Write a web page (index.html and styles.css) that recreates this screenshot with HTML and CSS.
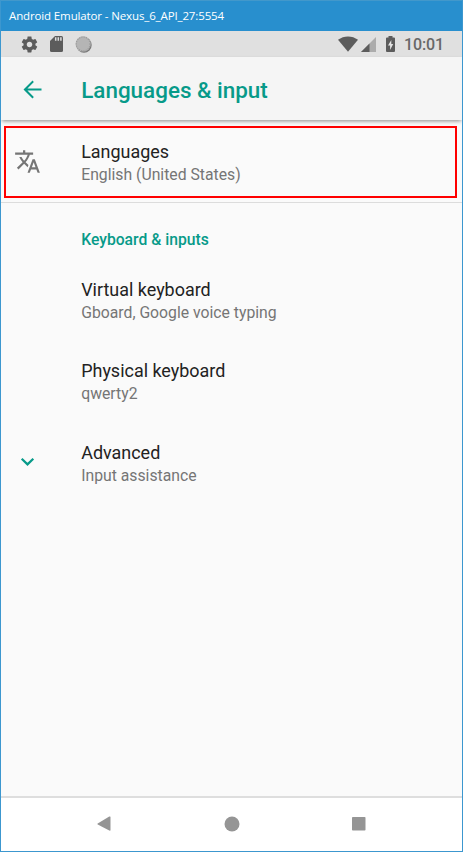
FILE: index.html
```html
<!DOCTYPE html>
<html lang="en">
<head>
<meta charset="utf-8">
<title>Android Emulator</title>
<link rel="stylesheet" href="styles.css">
</head>
<body>
<div class="window">
  <header class="titlebar">Android Emulator - Nexus_6_API_27:5554</header>
  <div class="statusbar">
    <div class="notifications">
      <svg width="19" height="19" viewBox="0 0 24 24"><path fill="#5c5c5c" d="M19.43 12.98c.04-.32.07-.64.07-.98s-.03-.66-.07-.98l2.11-1.65c.19-.15.24-.42.12-.64l-2-3.46c-.12-.22-.39-.3-.61-.22l-2.49 1c-.52-.4-1.08-.73-1.69-.98l-.38-2.65C14.46 2.18 14.25 2 14 2h-4c-.25 0-.46.18-.49.42l-.38 2.65c-.61.25-1.17.59-1.69.98l-2.49-1c-.23-.09-.49 0-.61.22l-2 3.46c-.13.22-.07.49.12.64l2.11 1.65c-.04.32-.07.65-.07.98s.03.66.07.98l-2.11 1.65c-.19.15-.24.42-.12.64l2 3.46c.12.22.39.3.61.22l2.49-1c.52.4 1.08.73 1.69.98l.38 2.65c.03.24.24.42.49.42h4c.25 0 .46-.18.49-.42l.38-2.65c.61-.25 1.17-.59 1.69-.98l2.49 1c.23.09.49 0 .61-.22l2-3.46c.12-.22.07-.49-.12-.64l-2.11-1.65zM12 15.5c-1.93 0-3.5-1.57-3.5-3.5s1.57-3.5 3.5-3.5 3.500 1.57 3.500 3.500-1.570 3.500-3.500 3.500z"/></svg>
      <svg class="sd" width="13" height="16" viewBox="0 0 13 16"><path fill="#5c5c5c" d="M5 0h6.500Q13 0 13 1.500v13Q13 16 11.500 16h-10Q0 16 0 14.500V5z"/><path stroke="#ddd" stroke-width="1.500" d="M5.700 1.200v3.500M8.300 1.200v3.500M10.900 1.200v3.500"/></svg>
      <svg class="disc" width="17" height="17" viewBox="0 0 16 16"><circle cx="8.500" cy="8.500" r="7.200" fill="#777"/><circle cx="7.700" cy="7.500" r="7.200" fill="#b5b5b5"/><circle cx="7.700" cy="7.500" r="6.500" fill="none" stroke="#999" stroke-width="1" stroke-dasharray="1.200 1"/></svg>
    </div>
    <div class="system">
      <svg width="20" height="16" viewBox="0 0 20 16"><path fill="#5c5c5c" d="M0 3.800Q4.500.4 10 .4T20 3.800L10 15.800z"/></svg>
      <svg class="signal" width="15" height="15" viewBox="0 0 15 15"><path fill="#acacac" d="M15 0v15H0z"/><path fill="#5c5c5c" d="M8.500 6.500V15H0z"/></svg>
      <svg class="battery" width="9" height="16" viewBox="0 0 9 16"><path fill="#5c5c5c" d="M2.500 0h4v1.500H8q1 0 1 1V15q0 1-1 1H1q-1 0-1-1V2.500q0-1 1-1h1.500z"/><path fill="#e5e5e5" d="M5.300 4L2 9.500h2.100V14L7.200 8H5.300z"/></svg>
      <span class="clock">10:01</span>
    </div>
  </div>
  <div class="appbar">
    <svg class="back" width="27" height="27" viewBox="0 0 24 24"><path fill="#079a89" d="M20 11.150H7.500l5.700-5.850L12 4.100 4 12l8 7.900 1.200-1.200-5.700-5.850H20z"/></svg>
    <h1>Languages &amp; input</h1>
  </div>
  <main>
    <div class="section">
      <div class="row highlighted">
        <svg class="icon" width="27" height="27" viewBox="0 0 24 24"><path fill="#757575" d="M12.870 15.070l-2.540-2.510.03-.03c1.740-1.940 2.980-4.170 3.710-6.530H17V4h-7V2H8v2H1v1.990h11.170C11.500 7.920 10.440 9.750 9 11.350 8.070 10.320 7.300 9.190 6.690 8h-2c.73 1.630 1.730 3.170 2.980 4.560l-5.090 5.020L4 19l5-5 3.110 3.110.76-2.040zM18.500 10h-2L12 22h2l1.120-3h4.750L21 22h2l-4.500-12zm-2.620 7l1.620-4.330L19.120 17h-3.240z"/></svg>
        <div><div class="name">Languages</div><div class="summary">English (United States)</div></div>
      </div>
    </div>
    <h2>Keyboard &amp; inputs</h2>
    <div class="row"><div><div class="name">Virtual keyboard</div><div class="summary">Gboard, Google voice typing</div></div></div>
    <div class="row"><div><div class="name">Physical keyboard</div><div class="summary">qwerty2</div></div></div>
    <div class="row">
      <svg class="icon" width="27" height="27" viewBox="0 0 27 27"><path d="M7.700 10.700l5.800 5.700 5.800-5.700" fill="none" stroke="#079a89" stroke-width="2.200"/></svg>
      <div><div class="name">Advanced</div><div class="summary">Input assistance</div></div>
    </div>
  </main>
  <nav>
    <svg width="14" height="16" viewBox="0 0 14 16"><path fill="#959595" d="M12.300.6Q13.500 0 13.500 1v13q0 1-1.200.5L.7 8.400Q0 8 .7 7.400z"/></svg>
    <svg width="16" height="16" viewBox="0 0 16 16"><circle cx="8" cy="8" r="7.500" fill="#959595"/></svg>
    <svg width="14" height="14" viewBox="0 0 14 14"><rect width="13.500" height="13.500" rx=".8" fill="#959595"/></svg>
  </nav>
</div>
</body>
</html>
```

FILE: styles.css
```css
* { box-sizing: border-box; }
body { margin: 0; font-family: Roboto, sans-serif; }
svg { display: block; flex: none; }
.window {
  width: 463px;
  height: 852px;
  border: 1px solid #3c97cf;
  border-top: 0;
  background: #fafafa;
  display: flex;
  flex-direction: column;
  overflow: hidden;
}
.titlebar {
  height: 31px;
  flex: none;
  margin: 0 -1px;
  padding-left: 9px;
  background: #288fce;
  border-top: 1px solid #4298cb;
  color: #fff;
  font: 11.500px/30px "Open Sans", sans-serif;
  letter-spacing: -0.130px;
  white-space: nowrap;
}
.statusbar {
  height: 26px;
  flex: none;
  display: flex;
  justify-content: space-between;
  align-items: center;
  padding: 0 18px 0 19px;
  background: #e0e0e0;
}
.notifications, .system { display: flex; align-items: center; }
.sd { margin-left: 11px; }
.disc { margin-left: 12px; }
.signal { margin-left: 3px; }
.battery { margin-left: 10px; }
.clock { margin-left: 9px; padding-top: 1px; font-size: 16px; line-height: 26px; letter-spacing: -0.1px; font-weight: 500; color: #686868; }
.appbar {
  height: 63px;
  flex: none;
  display: flex;
  align-items: center;
  padding-left: 17.500px;
  background: #f5f5f5;
  position: relative;
  box-shadow: 0 2px 4px -1px rgba(0, 0, 0, .45);
}
.back { margin-top: 1px; }
h1 { margin: 3px 0 0 35.700px; font-size: 22.450px; line-height: 28px; font-weight: 500; color: #079a89; white-space: nowrap; }
main { flex: 1; }
.section { height: 83px; padding: 6px 5px 0 3px; border-bottom: 1px solid #dcdcdc; }
.row { display: flex; height: 81.400px; padding: 18px 0 0 80.200px; position: relative; }
.highlighted { height: 72px; padding: 11.500px 0 0 75.200px; border: 2px solid #f00; }
.icon { position: absolute; left: 13px; top: 25.500px; }
.highlighted .icon { left: 8px; top: 20px; }
.name { font-size: 17.950px; line-height: 23px; color: #222; white-space: nowrap; }
.summary { padding-top: 1px; font-size: 15.750px; line-height: 22px; color: #757575; white-space: nowrap; }
h2 { margin: 26px 0 9px 80.200px; font-size: 15.700px; line-height: 22px; font-weight: 500; color: #079a89; }
nav {
  height: 55px;
  flex: none;
  display: flex;
  justify-content: space-between;
  align-items: center;
  padding: 0 96px 2px 96px;
  background: #fff;
  border-top: 2px solid #dedede;
}
```
